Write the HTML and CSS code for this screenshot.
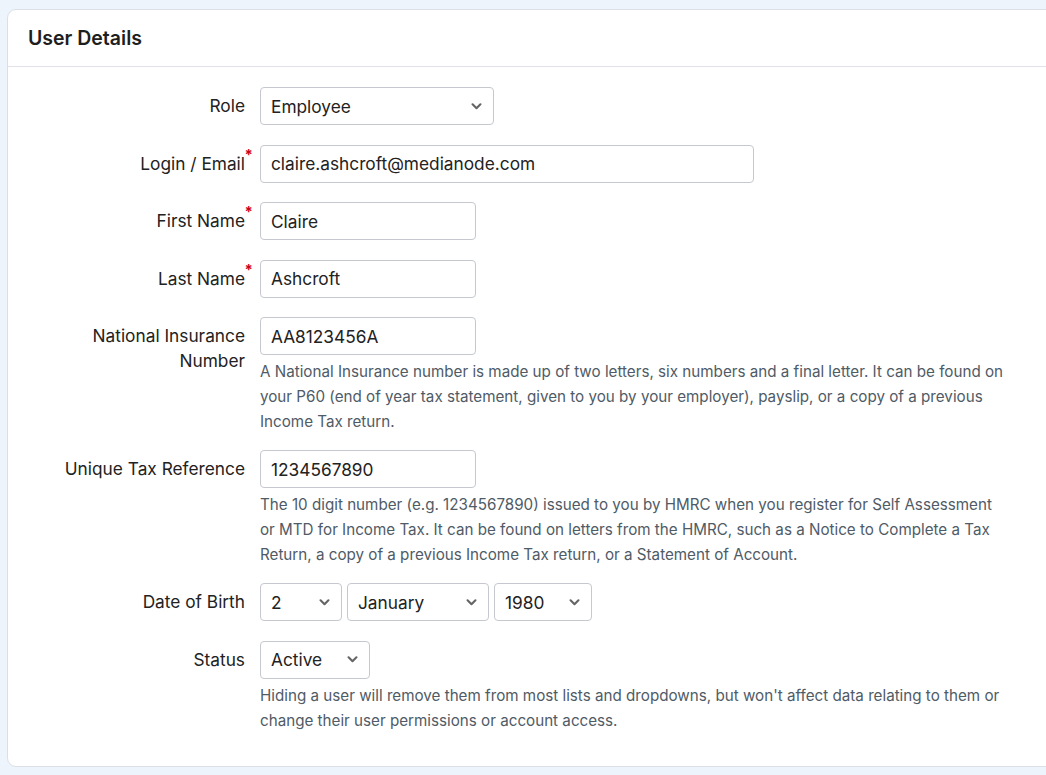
FILE: index.html
```html
<!DOCTYPE html>
<html lang="en">
<head>
    <meta charset="UTF-8">
    <meta name="viewport" content="width=device-width, initial-scale=1.0">
    <title>User Details</title>
    <link rel="stylesheet" href="styles.css">
</head>
<body>
    <div class="card">
        <div class="card-header">
            <h3>User Details</h3>
        </div>
        <form class="card-body">
            <div class="form-row">
                <label class="form-label" for="role">Role</label>
                <div class="form-field">
                    <select id="role" class="form-select w-role">
                        <option>Employee</option>
                    </select>
                </div>
            </div>
            <div class="form-row">
                <label class="form-label required" for="email">Login / Email</label>
                <div class="form-field">
                    <input type="text" id="email" class="form-input w-wide" value="claire.ashcroft@medianode.com">
                </div>
            </div>
            <div class="form-row">
                <label class="form-label required" for="firstName">First Name</label>
                <div class="form-field">
                    <input type="text" id="firstName" class="form-input w-mid" value="Claire">
                </div>
            </div>
            <div class="form-row">
                <label class="form-label required" for="lastName">Last Name</label>
                <div class="form-field">
                    <input type="text" id="lastName" class="form-input w-mid" value="Ashcroft">
                </div>
            </div>
            <div class="form-row has-help">
                <label class="form-label" for="niNumber">National Insurance Number</label>
                <div class="form-field">
                    <input type="text" id="niNumber" class="form-input w-mid" value="AA8123456A">
                    <p class="form-help">A National Insurance number is made up of two letters, six numbers and a final letter. It can be found on your P60 (end of year tax statement, given to you by your employer), payslip, or a copy of a previous Income Tax return.</p>
                </div>
            </div>
            <div class="form-row has-help">
                <label class="form-label" for="utr">Unique Tax Reference</label>
                <div class="form-field">
                    <input type="text" id="utr" class="form-input w-mid" value="1234567890">
                    <p class="form-help">The 10 digit number (e.g. 1234567890) issued to you by HMRC when you register for Self Assessment or MTD for Income Tax. It can be found on letters from the HMRC, such as a Notice to Complete a Tax Return, a copy of a previous Income Tax return, or a Statement of Account.</p>
                </div>
            </div>
            <div class="form-row">
                <label class="form-label" for="dobDay">Date of Birth</label>
                <div class="form-field date-group">
                    <select id="dobDay" class="form-select w-day"><option>2</option></select>
                    <select id="dobMonth" class="form-select w-month"><option>January</option></select>
                    <select id="dobYear" class="form-select w-year"><option>1980</option></select>
                </div>
            </div>
            <div class="form-row has-help">
                <label class="form-label" for="status">Status</label>
                <div class="form-field">
                    <select id="status" class="form-select w-status">
                        <option>Active</option>
                        <option>Hidden</option>
                    </select>
                    <p class="form-help">Hiding a user will remove them from most lists and dropdowns, but won't affect data relating to them or change their user permissions or account access.</p>
                </div>
            </div>
        </form>
    </div>
</body>
</html>
```

FILE: styles.css
```css
body {
    margin: 0;
    font-family: Inter, "Open Sans", sans-serif;
    background: #eef4fc;
    color: #222;
    padding: 9px 0 0 7px;
    height: 100vh;
    box-sizing: border-box;
    overflow: hidden;
}
.card {
    width: 1060px;
    background: #fff;
    border: 1px solid #dcdfe7;
    border-radius: 9px;
    box-sizing: border-box;
    height: 758px;
}
.card-header {
    height: 57px;
    border-bottom: 1px solid #e1e1ea;
    padding: 0 20px;
    display: flex;
    align-items: center;
    box-sizing: border-box;
}
.card-header h3 {
    margin: 0;
    font-size: 19.5px;
    font-weight: 600;
    color: #1e1e1e;
}
.card-body {
    padding: 20px 0 0;
}
.form-row {
    display: flex;
    align-items: flex-start;
    margin-bottom: 19.5px;
}
.form-row.has-help {
    margin-bottom: 16px;
}
.form-label {
    position: relative;
    width: 200px;
    margin-left: 37px;
    margin-right: 15px;
    text-align: right;
    font-size: 17.3px;
    line-height: 25px;
    padding-top: 6px;
}
.form-label.required::after {
    content: "*";
    position: absolute;
    top: 2px;
    right: -8px;
    color: #d0021b;
    font-size: 15px;
    font-weight: 700;
    line-height: 1;
}
.form-field {
    flex: 1;
}
.form-input,
.form-select {
    display: block;
    height: 38px;
    box-sizing: border-box;
    border: 1px solid #c5c8ce;
    border-radius: 4px;
    background: #fff;
    color: #222;
    font-family: inherit;
    font-size: 17.3px;
    padding: 0 10px;
    margin: 0;
}
.form-select {
    appearance: none;
    -webkit-appearance: none;
    background-image: url("data:image/svg+xml,%3Csvg xmlns='http://www.w3.org/2000/svg' width='12' height='8' viewBox='0 0 12 8'%3E%3Cpath d='M1.5 1.5 6 6l4.5-4.5' fill='none' stroke='%23666' stroke-width='2.4' stroke-linecap='round' stroke-linejoin='round'/%3E%3C/svg%3E");
    background-repeat: no-repeat;
    background-position: right 11px center;
    background-size: 11px 7px;
    padding-right: 30px;
}
.w-role { width: 234px; }
.w-wide { width: 494px; }
.w-mid { width: 216px; }
.w-day { width: 82px; }
.w-month { width: 142px; }
.w-year { width: 98px; }
.w-status { width: 110px; }
.date-group {
    display: flex;
    gap: 5px;
}
.form-help {
    width: 747px;
    margin: 4px 0 0;
    font-size: 15.2px;
    line-height: 25px;
    color: #4f5b66;
}
```
